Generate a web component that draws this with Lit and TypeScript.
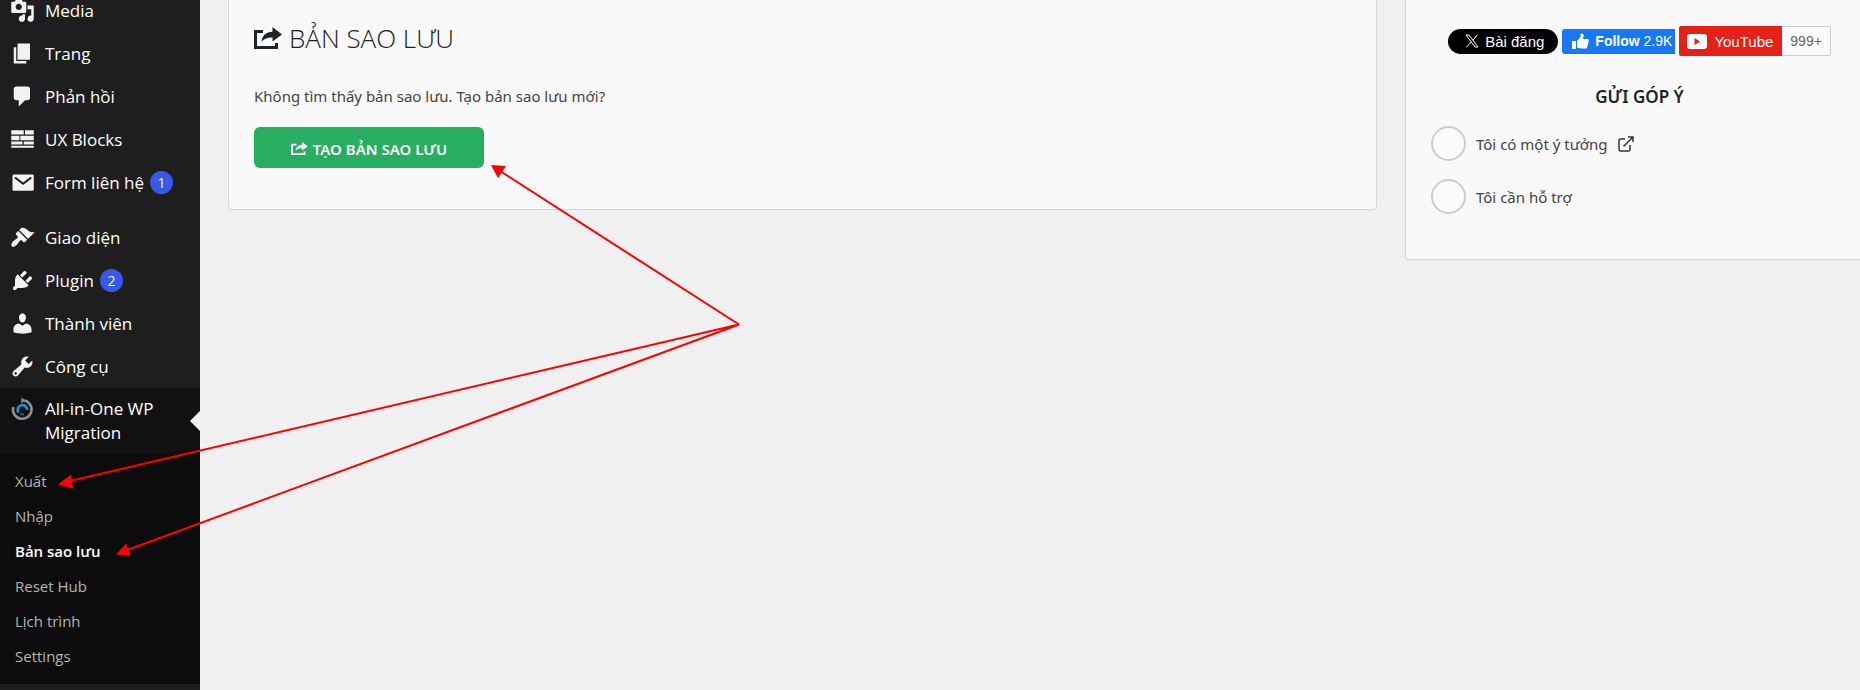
import { LitElement, html, css, svg, nothing } from "lit";
import { customElement } from "lit/decorators.js";
import { classMap } from "lit/directives/class-map.js";

interface MenuEntry {
  label: string;
  icon: unknown;
  count?: number;
}

const contentMenu: MenuEntry[] = [
  {
    label: "Media",
    icon: svg`<path d="M13 11V4c0-.55-.45-1-1-1h-1.67L9 1H5L3.67 3H2c-.55 0-1 .45-1 1v7c0 .55.45 1 1 1h10c.55 0 1-.45 1-1zM7 4.5c1.38 0 2.5 1.12 2.5 2.5S8.38 9.5 7 9.5 4.5 8.38 4.5 7 5.62 4.5 7 4.5zM14 6h5v10.5c0 1.38-1.12 2.5-2.5 2.5S14 17.88 14 16.5s1.12-2.5 2.5-2.5c.17 0 .34.02.5.05V9h-3V6zm-4 8.05V13h2v3.5c0 1.38-1.12 2.5-2.5 2.5S7 17.88 7 16.5 8.12 14 9.5 14c.17 0 .34.02.5.05z"/>`,
  },
  { label: "Trang", icon: svg`<path d="M6 15V2h10v13H6zm-1 1h8v2H3V5h2v11z"/>` },
  {
    label: "Phản hồi",
    icon: svg`<path d="M5 2h9c1.1 0 2 .9 2 2v7c0 1.1-.9 2-2 2h-2l-5 5v-5H5c-1.1 0-2-.9-2-2V4c0-1.1.9-2 2-2z"/>`,
  },
  {
    label: "UX Blocks",
    icon: svg`<path d="M1 2.500h10v3.500H1zM12 2.500h7v3.500h-7zM1 7h6.500v3.500H1zM8.300 7H19v3.500H8.300zM1 11.500h9v2.500H1zM11 11.500h8v2.500h-8zM1 15h18v1.500H1z"/>`,
  },
  {
    label: "Form liên hệ",
    count: 1,
    icon: svg`<path d="M3 3.500h15a1 1 0 0 1 1 1V15.500a1 1 0 0 1-1 1H3a1 1 0 0 1-1-1V4.500a1 1 0 0 1 1-1z"/><path d="M4 6l6.500 5L17 6" fill="none" stroke="#1e1e1e" stroke-width="1.700"/>`,
  },
];

const systemMenu: MenuEntry[] = [
  {
    label: "Giao diện",
    icon: svg`<path d="M14.48 11.06L7.41 3.99l1.5-1.5c.5-.56 2.3-.47 3.51.32 1.21.8 1.43 1.28 2.91 2.1 1.18.64 2.45 1.26 4.45.85zm-.71.71L6.7 4.7 4.93 6.47c-.39.39-.39 1.02 0 1.41l1.06 1.06c.39.39.39 1.03 0 1.42-.6.6-1.43 1.11-2.21 1.69-.35.26-.7.53-1.01.84C1.43 14.23.4 16.08 1.4 17.07c.99 1 2.84-.03 4.18-1.36.31-.31.58-.66.85-1.02.57-.78 1.08-1.61 1.69-2.21.39-.39 1.02-.39 1.41 0l1.06 1.06c.39.39 1.02.39 1.41 0z"/>`,
  },
  {
    label: "Plugin",
    count: 2,
    icon: svg`<path d="M13.11 4.36L9.87 7.6 8 5.73l3.24-3.24c.35-.34 1.05-.2 1.56.32.52.51.66 1.21.31 1.55zm-8 1.77l.91-1.12 9.01 9.01-1.19.84c-.71.71-2.63 1.16-3.82 1.16H6.14L4.9 17.26c-.59.59-1.54.59-2.12 0-.59-.58-.59-1.53 0-2.12l1.24-1.24v-3.88c0-1.13.4-3.19 1.09-3.89zm7.26 3.97l3.24-3.24c.34-.35 1.04-.21 1.55.31.52.51.66 1.21.31 1.55l-3.24 3.25z"/>`,
  },
  {
    label: "Thành viên",
    icon: svg`<path d="M10 9.250c-2.270 0-2.730-3.440-2.730-3.440C7 4.020 7.820 2 9.970 2c2.160 0 2.980 2.020 2.710 3.810 0 0-.41 3.440-2.680 3.440zm0 2.570L12.720 10c2.390 0 4.520 2.330 4.520 4.530v2.490s-3.650 1.130-7.240 1.130c-3.650 0-7.240-1.130-7.240-1.130v-2.490c0-2.250 1.940-4.480 4.470-4.480z"/>`,
  },
  {
    label: "Công cụ",
    icon: svg`<path d="M16.68 9.77c-1.34 1.34-3.3 1.67-4.95.99l-5.41 6.52c-.99.99-2.59.99-3.58 0s-.99-2.59 0-3.57l6.52-5.42c-.68-1.65-.35-3.61.99-4.95 1.28-1.28 3.12-1.62 4.72-1.06l-2.89 2.89 2.82 2.82 2.86-2.87c.53 1.58.18 3.39-1.08 4.65zM3.81 16.21c.4.39 1.04.39 1.43 0 .4-.4.4-1.04 0-1.43-.39-.4-1.03-.4-1.43 0-.39.39-.39 1.03 0 1.43z"/>`,
  },
];

const submenu = ["Xuất", "Nhập", "Bản sao lưu", "Reset Hub", "Lịch trình", "Settings"];
const currentPage = "Bản sao lưu";

const exportGlyph = svg`<path d="M9 4.500H1.500V20.500H22.500V16" fill="none" stroke="currentColor" stroke-width="3"/><path d="M7.500 15C8 9 12 4.800 18.500 4.800V0l9.500 7.500-9.500 7V10.500C14 10.500 10 11.500 7.500 15z" fill="currentColor"/>`;

@customElement("admin-sidebar")
export class AdminSidebar extends LitElement {
  static styles = css`
    :host {
      display: block;
      background: #1e1e1e;
      color: #fff;
      font-family: "Open Sans", "Noto Sans", sans-serif;
      font-size: 17px;
      line-height: 24px;
    }
    .group {
      display: flex;
      flex-direction: column;
    }
    .first {
      margin-top: -11px;
      margin-bottom: 12px;
    }
    .item {
      display: grid;
      grid-template-columns: 45px auto 1fr;
      align-items: center;
      height: 43px;
      color: inherit;
      text-decoration: none;
    }
    .icon {
      width: 25px;
      height: 25px;
      margin-left: 10px;
      fill: #f3f1f1;
    }
    .count {
      justify-self: start;
      box-sizing: border-box;
      min-width: 23px;
      height: 23px;
      margin-left: 6px;
      border-radius: 12px;
      background: #3858e9;
      font-size: 14px;
      line-height: 23px;
      text-align: center;
    }
    .current {
      position: relative;
      height: auto;
      padding: 9px 0 9px;
      background: #111;
      align-items: start;
    }
    .current::after {
      content: "";
      position: absolute;
      right: 0;
      top: 23px;
      border: 10px solid transparent;
      border-left: 0;
      border-right-color: #f0f0f0;
    }
    .sub {
      display: flex;
      flex-direction: column;
      padding: 9px 0 11px;
      background: #0c0c0c;
      font-size: 15px;
    }
    .subitem {
      padding: 6px 15px 5px;
      color: #b4b4b4;
      text-decoration: none;
    }
    .active {
      color: #fff;
      font-weight: 600;
    }
  `;

  private entry(e: MenuEntry) {
    return html`<a class="item" href="#">
      <svg class="icon" viewBox="0 0 20 20" aria-hidden="true">${e.icon}</svg>
      <span>${e.label}</span>
      ${e.count ? html`<span class="count">${e.count}</span>` : nothing}
    </a>`;
  }

  render() {
    return html`<nav>
      <div class="group first">${contentMenu.map((e) => this.entry(e))}</div>
      <div class="group">${systemMenu.map((e) => this.entry(e))}</div>
      <a class="item current" href="#">
        <svg class="icon" viewBox="0 0 25 25" aria-hidden="true">
          <path d="M12 3.200A9.300 9.300 0 1 1 3.300 10" fill="none" stroke="#8c8f94" stroke-width="2.600" />
          <path d="M11.500 0l3 3.500-3.500 3z" fill="#8c8f94" />
          <path d="M8.500 15.500A4.800 4.800 0 1 1 17.300 13" fill="none" stroke="#1b8fd0" stroke-width="2.800" />
          <path d="M10 16.500l4 1.500" stroke="#1b6c9c" stroke-width="1.500" />
        </svg>
        <span>All-in-One WP<br />Migration</span>
      </a>
      <div class="sub">
        ${submenu.map(
          (label) =>
            html`<a class=${classMap({ subitem: true, active: label === currentPage })} href="#">${label}</a>`,
        )}
      </div>
    </nav>`;
  }
}

@customElement("backups-panel")
export class BackupsPanel extends LitElement {
  static styles = css`
    :host {
      display: block;
      box-sizing: border-box;
      padding: 18px 25px 41px;
      border: 1px solid #d6d6d6;
      border-top: 0;
      border-radius: 0 0 4px 4px;
      background: #f9f9f9;
    }
    .title {
      display: flex;
      align-items: center;
      gap: 7px;
      margin: 0;
      color: #1d2327;
      font-family: "Open Sans", "Noto Sans", sans-serif;
      font-size: 26px;
      font-weight: 300;
      line-height: 40px;
    }
    .glyph {
      width: 28px;
      height: 22px;
    }
    .note {
      margin: 26px 0 19px;
      color: #444;
      font-size: 15px;
      line-height: 24px;
    }
    .create {
      display: flex;
      align-items: center;
      justify-content: center;
      gap: 5px;
      min-width: 230px;
      height: 41px;
      padding: 2px 20px 0;
      border: 0;
      border-radius: 6px;
      background: #27ae60;
      color: #fff;
      font: inherit;
      font-size: 15px;
      font-weight: 600;
    }
    .small {
      width: 17px;
      height: 13px;
    }
  `;

  render() {
    return html`
      <h1 class="title">
        <svg class="glyph" viewBox="0 0 28 22" aria-hidden="true">${exportGlyph}</svg>
        BẢN SAO LƯU
      </h1>
      <p class="note">Không tìm thấy bản sao lưu. Tạo bản sao lưu mới?</p>
      <button class="create" type="button">
        <svg class="small" viewBox="0 0 28 22" aria-hidden="true">${exportGlyph}</svg>
        TẠO BẢN SAO LƯU
      </button>
    `;
  }
}

@customElement("feedback-panel")
export class FeedbackPanel extends LitElement {
  static styles = css`
    :host {
      display: block;
      box-sizing: border-box;
      padding: 26px 12px 45px 25px;
      border: 1px solid #d6d6d6;
      border-width: 0 0 1px 1px;
      border-radius: 0 0 0 4px;
      background: #f9f9f9;
    }
    .social {
      display: flex;
      align-items: center;
      justify-content: center;
      gap: 4px;
      height: 30px;
      font-family: "Liberation Sans", Arial, sans-serif;
    }
    .link {
      display: flex;
      align-items: center;
      box-sizing: border-box;
      height: 25px;
      color: #fff;
      text-decoration: none;
      white-space: nowrap;
    }
    .x {
      gap: 6px;
      padding: 0 14px 0 17px;
      border-radius: 13px;
      background: #000;
      font-size: 15px;
    }
    .fb {
      gap: 6px;
      padding: 0 3px 0 10px;
      border-radius: 3px 0 0 3px;
      background: #1877f2;
      font-size: 14px;
    }
    .yt {
      height: 30px;
      font-size: 15px;
    }
    .brand {
      display: flex;
      align-items: center;
      gap: 7px;
      height: 30px;
      padding: 0 9px 0 8px;
      border-radius: 2px 0 0 2px;
      background: #e62117;
    }
    .subs {
      box-sizing: border-box;
      height: 30px;
      padding: 0 8px;
      border: 1px solid #ccc;
      border-left: 0;
      border-radius: 0 2px 2px 0;
      background: #fcfcfc;
      color: #666;
      font-size: 14px;
      line-height: 28px;
    }
    .heading {
      margin: 28px 0 16px;
      color: #1d2327;
      font-size: 17px;
      font-weight: 600;
      line-height: 26px;
      text-align: center;
    }
    .choices {
      display: grid;
      gap: 18px;
      margin: 0;
      padding: 0;
      border: 0;
    }
    .choice {
      display: flex;
      align-items: center;
      gap: 10px;
      color: #444;
      font-size: 15px;
      line-height: 24px;
    }
    .radio {
      appearance: none;
      box-sizing: border-box;
      width: 35px;
      height: 35px;
      margin: 0;
      border: 2px solid #ccc;
      border-radius: 50%;
      background: #fbfbfb;
    }
    .open {
      display: flex;
      color: #333;
    }
  `;

  render() {
    return html`
      <div class="social">
        <a class="link x" href="#">
          <svg width="14" height="14" viewBox="0 0 14 14" fill="none" stroke="#fff" aria-hidden="true">
            <path d="M1 1h3l9 12h-3zM12.500 .8L7.800 6.200M6.200 8L1.300 13.300" />
          </svg>
          Bài đăng
        </a>
        <a class="link fb" href="#">
          <svg width="17" height="17" viewBox="0 0 17 17" fill="#fff" aria-hidden="true">
            <path d="M0 8h4v8H0zM5 8l3.500-4V1.200C9.500-.3 12 .5 11.700 3L11 6h4.500c1.500 0 1.700 1.800.8 2.400.7.800.4 1.800-.3 2.200.4.900 0 1.700-.6 2 .2 1.600-.4 2.900-2 2.900H8.500L5 14.500z" />
          </svg>
          <span><b>Follow</b> 2.9K</span>
        </a>
        <a class="link yt" href="#">
          <span class="brand">
            <svg width="20" height="16" viewBox="0 0 20 16" aria-hidden="true">
              <rect y="1" width="20" height="15" rx="3" fill="#fff" />
              <path d="M7.500 5v7l5.500-3.500z" fill="#e62117" />
            </svg>
            YouTube
          </span>
          <span class="subs">999+</span>
        </a>
      </div>
      <h2 class="heading">GỬI GÓP Ý</h2>
      <fieldset class="choices" aria-label="GỬI GÓP Ý">
        <label class="choice">
          <input class="radio" type="radio" name="feedback" value="idea" />
          Tôi có một ý tưởng
          <span class="open">
            <svg width="16" height="16" viewBox="0 0 16 16" fill="none" stroke="currentColor" stroke-width="1.500" aria-hidden="true">
              <path d="M7 3H2.500Q1 3 1 4.500V13.500Q1 15 2.500 15H10.500Q12 15 12 13.500V9M5.500 10.500L15 1M10 1H15V6" />
            </svg>
          </span>
        </label>
        <label class="choice">
          <input class="radio" type="radio" name="feedback" value="support" />
          Tôi cần hỗ trợ
        </label>
      </fieldset>
    `;
  }
}

@customElement("app-root")
export class AppRoot extends LitElement {
  static styles = css`
    :host {
      display: block;
      position: relative;
      min-height: 100vh;
      background: #f0f0f0;
      font-family: "Noto Sans", "Open Sans", sans-serif;
    }
    .page {
      display: grid;
      grid-template-columns: 200px minmax(0, 1fr) 455px;
      column-gap: 28px;
      min-height: 100vh;
      align-items: start;
    }
    .nav {
      align-self: stretch;
    }
    .arrows {
      position: absolute;
      left: 0;
      top: 0;
      pointer-events: none;
    }
  `;

  render() {
    return html`
      <div class="page">
        <admin-sidebar class="nav"></admin-sidebar>
        <backups-panel></backups-panel>
        <feedback-panel></feedback-panel>
      </div>
      <svg class="arrows" width="760" height="600" viewBox="0 0 760 600" fill="#f00" aria-hidden="true">
        <path d="M739 324.500L500 171M739 324.500L68 481.500M739 324.500L126 550.500" fill="none" stroke="#f00" stroke-width="2" />
        <path d="M491 165l15 1-8 12zM58 484.500l13-10 2 14zM116 554.500l10-11 5 12z" />
      </svg>
    `;
  }
}
